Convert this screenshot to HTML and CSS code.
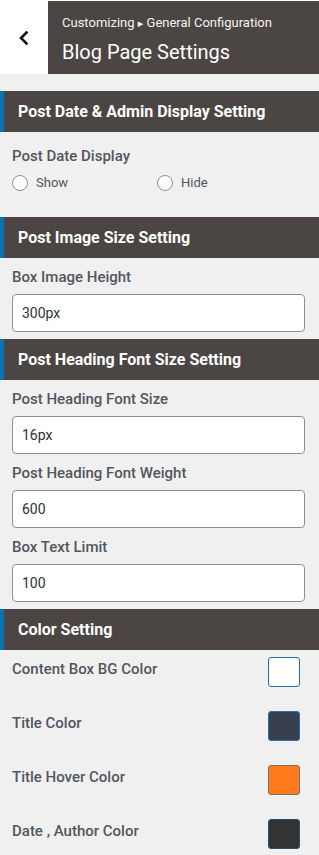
FILE: index.html
```html
<!DOCTYPE html>
<html lang="en">
<head>
<meta charset="utf-8">
<title>Blog Page Settings</title>
<link rel="stylesheet" href="styles.css">
</head>
<body>
<div class="panel">
  <header class="panel-head">
    <button class="back" aria-label="Back">
      <svg width="12" height="14" viewBox="0 0 12 14"><polyline points="8.5,1.5 3,7 8.5,12.5" fill="none" stroke="#111" stroke-width="2.6" stroke-linecap="square"/></svg>
    </button>
    <div class="head-title">
      <div class="crumb">Customizing <span class="tri">▸</span> General Configuration</div>
      <h1 class="title">Blog Page Settings</h1>
    </div>
  </header>

  <section class="sec sec-first">
    <h2 class="sec-title">Post Date &amp; Admin Display Setting</h2>
    <div class="control">
      <span class="label label-first">Post Date Display</span>
      <div class="radios">
        <label class="radio"><span class="dot"></span>Show</label>
        <label class="radio"><span class="dot"></span>Hide</label>
      </div>
    </div>
  </section>

  <section class="sec sec-second">
    <h2 class="sec-title">Post Image Size Setting</h2>
    <div class="control">
      <span class="label">Box Image Height</span>
      <div class="input">300px</div>
    </div>
  </section>

  <section class="sec">
    <h2 class="sec-title">Post Heading Font Size Setting</h2>
    <div class="control">
      <span class="label">Post Heading Font Size</span>
      <div class="input">16px</div>
      <span class="label">Post Heading Font Weight</span>
      <div class="input">600</div>
      <span class="label">Box Text Limit</span>
      <div class="input">100</div>
    </div>
  </section>

  <section class="sec">
    <h2 class="sec-title">Color Setting</h2>
    <div class="colors">
      <div class="color-row"><span class="label-inline">Content Box BG Color</span><span class="swatch sw-white"></span></div>
      <div class="color-row"><span class="label-inline">Title Color</span><span class="swatch sw-slate"></span></div>
      <div class="color-row"><span class="label-inline">Title Hover Color</span><span class="swatch sw-orange"></span></div>
      <div class="color-row"><span class="label-inline">Date , Author Color</span><span class="swatch sw-dark"></span></div>
    </div>
  </section>
</div>
</body>
</html>
```

FILE: styles.css
```css
* { box-sizing: border-box; }
html, body { margin: 0; padding: 0; }
body {
  background: #f0f0f1;
  font-family: Roboto, "Noto Sans", "Liberation Sans", sans-serif;
  width: 319px;
  height: 855px;
  overflow: hidden;
}
.panel-head {
  display: flex;
  height: 74px;
  padding-top: 1px;
  background: #fff;
}
.back {
  width: 48px;
  border: 0;
  padding: 0;
  background: #fff;
  display: flex;
  align-items: center;
  justify-content: center;
}
.back svg { display: block; margin-top: 1px; margin-left: -1px; }
.head-title {
  flex: 1;
  background: #4b4644;
  color: #fff;
  padding: 13px 0 0 14px;
}
.crumb {
  font-size: 13px;
  line-height: 17px;
  color: #f3f3f3;
}
.tri { font-size: 11px; font-family: "DejaVu Sans", sans-serif; }
.title {
  margin: 8px 0 0;
  font-size: 20px;
  font-weight: 400;
  line-height: 24px;
}
.sec-first { margin-top: 17px; }
.sec-title {
  margin: 0;
  height: 41px;
  line-height: 41px;
  background: #4b4644;
  border-left: 4px solid #0a73b2;
  color: #fff;
  font-size: 16px;
  font-weight: 700;
  padding-left: 14px;
}
.control {
  display: flex;
  flex-direction: column;
  padding: 0 14px 7px 12px;
}
.label {
  display: block;
  margin-top: 10px;
  font-size: 15px;
  font-weight: 500;
  line-height: 18px;
  color: #50575e;
}
.label-first { margin-top: 15px; }
.sec-first .control { padding-bottom: 26px; }
.radios {
  display: flex;
  margin-top: 10px;
}
.radio {
  width: 145px;
  display: flex;
  align-items: center;
  font-size: 13px;
  line-height: 16px;
  color: #50575e;
}
.dot {
  width: 16px;
  height: 16px;
  border: 1px solid #8c8f94;
  border-radius: 50%;
  background: #fff;
  margin-right: 8px;
}
.input {
  margin-top: 8px;
  height: 38px;
  border: 1px solid #8c8f94;
  border-radius: 4px;
  background: #fff;
  font-size: 14px;
  line-height: 36px;
  padding-left: 9px;
  color: #2c3338;
}
.colors {
  display: flex;
  flex-direction: column;
  gap: 24px;
  padding: 7px 19px 0 12px;
}
.color-row {
  display: flex;
  align-items: center;
  justify-content: space-between;
  height: 30px;
}
.label-inline {
  font-size: 15px;
  font-weight: 500;
  line-height: 18px;
  padding-bottom: 6px;
  color: #50575e;
}
.swatch {
  width: 32px;
  height: 30px;
  border-radius: 3px;
  border: 1px solid #2271b1;
}
.sw-white { background: #fff; }
.sw-slate { background: #383f4f; }
.sw-orange { background: #ff7a1b; border-color: #7c6f67; }
.sw-dark { background: #333333; border-color: #2b4f6e; }
```
